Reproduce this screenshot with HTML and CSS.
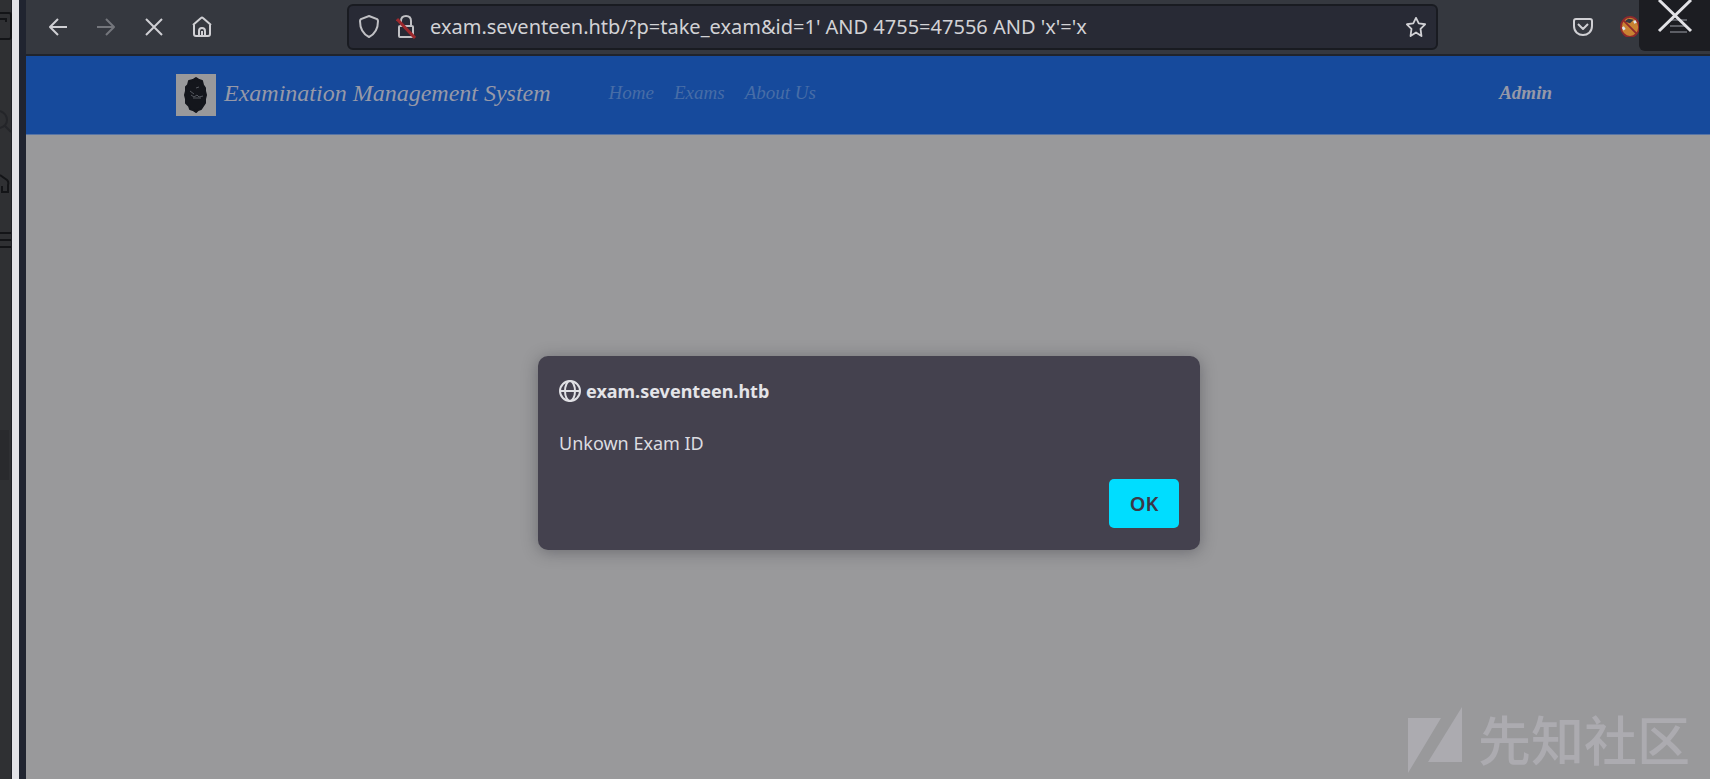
FILE: index.html
```html
<!DOCTYPE html>
<html lang="en">
<head>
<meta charset="utf-8">
<title>Examination Management System</title>
<link rel="stylesheet" href="styles.css">
</head>
<body>
<div class="screen">
  <aside class="edge" aria-hidden="true">
    <svg class="edge-art" viewBox="0 0 12 480" fill="none" stroke="#131417" stroke-width="2">
      <path d="M0 13h9q2 0 2 2v22q0 2-2 2H0M0 19h6v3"/>
      <path d="M0 111q7 3 7 9t-7 8M5 126l6 6" stroke="#242529"/>
      <path d="M0 175l7 5q2 2 1 5v7H2v-6"/>
      <path d="M0 233h11M0 240h11M0 247h11"/>
      <path d="M0 430h9v50H0z" fill="#292a2d" stroke="none"/>
    </svg>
  </aside>
  <div class="divider"></div>
  <div class="browser">
    <header class="toolbar">
      <div class="tools">
        <button class="tool" type="button" aria-label="Back"><svg viewBox="0 0 20 20"><path d="M19 10H2M10 2l-8 8 8 8"/></svg></button>
        <button class="tool tool-off" type="button" aria-label="Forward"><svg viewBox="0 0 20 20"><path d="M1 10h17M10 2l8 8-8 8"/></svg></button>
        <button class="tool" type="button" aria-label="Stop"><svg viewBox="0 0 20 20"><path d="M2 2l16 16M18 2L2 18"/></svg></button>
        <button class="tool" type="button" aria-label="Home"><svg viewBox="0 0 20 22"><path d="M1 9l8-7q1-1 2 0l8 7M2 9v9q0 2 2 2h12q2 0 2-2V9M7 20v-5q0-3 3-3t3 3v5M10 15v5"/></svg></button>
      </div>
      <div class="address">
        <svg class="icon" viewBox="0 0 20 24"><path d="M10 1l8 3q1 1 1 2c0 8-3 13-9 16C4 19 1 14 1 6q0-1 1-2z"/></svg>
        <svg class="icon" viewBox="0 0 20 24"><path d="M5 11V6q0-5 5-5t5 5v5M4 11h12q1 0 1 1v9q0 1-1 1H4q-1 0-1-1v-9q0-1 1-1z"/><path class="slash" d="M1 4l18 19"/></svg>
        <input class="url" type="text" aria-label="Address" value="exam.seventeen.htb/?p=take_exam&amp;id=1' AND 4755=47556 AND 'x'='x">
        <button class="tool" type="button" aria-label="Bookmark"><svg viewBox="0 0 22 22"><path d="M11 1l3 6 7 1-5 5 1 8-6-4-6 4 1-8-5-5 7-1z"/></svg></button>
      </div>
      <div class="extras">
        <button class="tool" type="button" aria-label="Pocket"><svg viewBox="0 0 20 20"><path d="M3 2h14q2 0 2 2v5c0 12-18 12-18 0V4q0-2 2-2zM5 7l5 5 5-5"/></svg></button>
        <button class="tool" type="button" aria-label="Proxy"><svg viewBox="0 0 22 24"><ellipse cx="11" cy="12" rx="10" ry="11" fill="#c98232" stroke="none"/><path d="M5 6l4-3 6 1-4 4z" fill="#343842" stroke="none"/><path d="M3 12l2 3M16 5l1 3" stroke="#dce5eb" stroke-width="3"/><ellipse cx="11" cy="12" rx="10" ry="11" stroke="#8f292c"/><path d="M4 5l14 14" stroke="#8f292c"/></svg></button>
      </div>
    </header>
    <nav class="nav">
      <a class="brand" href="#">
        <svg class="logo" viewBox="0 0 40 42"><path fill="#99999b" d="M0 0h40v42H0z"/><path fill="#14161c" stroke="#14161c" stroke-width="2" stroke-linejoin="round" d="M20 4l3 2 3 1 1 4 2 3v3l1 4-1 4v4l-2 3-2 3-3 1-2 2-3-2-3-1-1-3-3-3v-4l-1-4 1-4v-4l2-2 1-4 4-1z"/><path fill="none" stroke="#55585f" d="M14 17l4 3M20 14l3-1M15 21l3 2 3-2 2 2 4-1M17 24h8"/></svg>
        <span>Examination Management System</span>
      </a>
      <div class="links">
        <a href="#">Home</a>
        <a href="#">Exams</a>
        <a href="#">About Us</a>
      </div>
      <a class="user" href="#">Admin</a>
    </nav>
    <main class="page">
      <section class="dialog" role="alertdialog" aria-labelledby="site" aria-describedby="message">
        <h1 class="site" id="site">
          <svg class="globe" viewBox="0 0 22 22"><circle cx="11" cy="11" r="10"/><ellipse cx="11" cy="11" rx="5" ry="10"/><path d="M1 11h20"/></svg>
          exam.seventeen.htb
        </h1>
        <p class="message" id="message">Unkown Exam ID</p>
        <button class="ok" type="button">OK</button>
      </section>
    </main>
  </div>
</div>
<button class="close" type="button" aria-label="Close">
  <svg viewBox="0 0 71 51"><path d="M31 20h17M31 26h17M31 32h17" stroke="#5c5e65" stroke-width="2"/><path d="M20 0l32 31M52 0L20 31" stroke="#e2e2e6" stroke-width="3"/></svg>
</button>
<div class="watermark" lang="zh">
  <svg viewBox="0 0 54 66"><path fill="#acabb0" d="M0 11h33L0 66zM54 0v55H20z"/></svg>
  <span>先知社区</span>
</div>
</body>
</html>
```
FILE: styles.css
```css
* { box-sizing: border-box; }
body { margin: 0; font-family: "Noto Sans", "Open Sans", sans-serif; background: #99999b; }
button { padding: 0; border: 0; background: none; font: inherit; }
a { color: inherit; text-decoration: none; }
svg { display: block; }

.screen { display: flex; min-height: 100vh; }
.edge { width: 12px; background: #2f3033; border-right: 1px solid #202128; }
.edge-art { width: 12px; height: 480px; }
.divider { width: 14px; border-left: 7px solid #e2e2e7; background: #202430; }
.browser { flex: 1; display: flex; flex-direction: column; min-width: 0; }

.toolbar { display: flex; align-items: center; height: 56px; padding: 0 70px 1px 22px; background: #35383f; border-bottom: 2px solid #20242c; }
.tools { display: flex; align-items: center; gap: 28px; }
.tool { width: 20px; color: #d0d0d4; }
.tool svg { width: 100%; fill: none; stroke: currentColor; stroke-width: 2; stroke-linejoin: round; }
.tool-off { color: #74767c; }
.address { flex: 1; display: flex; align-items: center; height: 46px; margin: 0 135px; padding: 0 10px; border: 2px solid #191b21; border-radius: 6px; background: #282a35; }
.icon { width: 20px; height: 24px; margin-right: 17px; fill: none; stroke: #c0c0c4; stroke-width: 2; }
.icon + .icon { margin-right: 14px; }
.slash { stroke: #9c292d; stroke-width: 3; }
.url { flex: 1; min-width: 0; padding: 0; border: 0; outline: 0; background: none; color: #d2d2d5; font: 20px "Noto Sans", "Open Sans", sans-serif; }
.extras { display: flex; align-items: center; gap: 27px; }

.nav { display: flex; align-items: center; height: 79px; padding: 0 158px 0 150px; background: #164a9c; border-bottom: 1px solid #5774a5; font-family: "Monotype Corsiva", "Apple Chancery", "Liberation Serif", serif; font-style: italic; font-size: 19px; line-height: 24px; color: #9699a8; }
.brand { display: flex; align-items: center; gap: 8px; font-size: 24px; white-space: nowrap; }
.logo { width: 40px; height: 42px; }
.brand span, .links, .user { padding-bottom: 4px; }
.links { display: flex; gap: 20px; margin-left: 58px; color: #476da7; white-space: nowrap; }
.user { margin-left: auto; font-weight: bold; }

.page { flex: 1; display: flex; align-items: center; justify-content: center; padding: 0 0 9px 2px; background: #99999b; }
.dialog { display: flex; flex-direction: column; width: 662px; max-width: 100%; padding: 20px 21px 22px; border-radius: 10px; background: #44414e; box-shadow: 0 2px 16px rgba(40, 40, 50, 0.4); color: #dcdce0; font-size: 18px; }
.site { display: flex; align-items: center; gap: 5px; height: 30px; margin: 0; font-size: 18px; color: #e4e4e8; }
.globe { width: 22px; height: 22px; fill: none; stroke: #e0e0e4; stroke-width: 2; }
.message { margin: 22px 0 21px; line-height: 30px; }
.ok { align-self: flex-end; width: 70px; height: 49px; border-radius: 5px; background: #00ddff; color: #3b3847; font-size: 20px; font-weight: 600; }

.close { position: fixed; top: 0; right: 0; width: 71px; height: 51px; border-radius: 0 0 0 6px; background: #1c1d22; }
.close svg { width: 71px; height: 51px; fill: none; }
.watermark { position: fixed; right: 20px; bottom: 6px; display: flex; align-items: flex-end; gap: 16px; font: 500 53px/66px "Noto Sans CJK SC", sans-serif; color: #acabb0; }
.watermark svg { width: 54px; height: 66px; }
.watermark span { padding-bottom: 2px; }
```
